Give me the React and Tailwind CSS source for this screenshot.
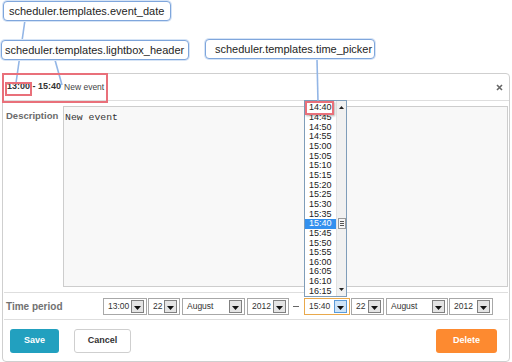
import React from "react";

const times = [
   "14:40", "14:45", "14:50", "14:55", "15:00", "15:05", "15:10", "15:15", "15:20", "15:25",
   "15:30", "15:35", "15:40", "15:45", "15:50", "15:55", "16:00", "16:05", "16:10", "16:15",
];

function Arrow({ focus }) {
   return (
      <div
         className={
            "ml-auto mr-[2px] w-[13px] h-[13px] border flex items-center justify-center " +
            (focus ? "border-[#5b9bd8] bg-[#cfe5f8]" : "border-[#808080] bg-[#e4e4e4]")
         }
      >
         <svg width="7" height="4" viewBox="0 0 7 4" className="mt-[3px]">
            <path d="M0 0 L7 0 L3.5 4 Z" fill="#111" />
         </svg>
      </div>
   );
}

function Select({ value, width, focus }) {
   return (
      <div
         className={
            "flex items-center h-[17px] bg-white border text-[8.5px] text-[#333] " +
            width +
            (focus ? " border-[#e9a94c]" : " border-[#a8a8a8]")
         }
      >
         <span className="pl-[4px]">{value}</span>
         <Arrow focus={focus} />
      </div>
   );
}

function Callout({ text, className }) {
   return (
      <div
         className={
            "absolute h-[20px] flex items-center bg-white border border-[#7fa6dc] rounded-[4px] shadow-[0_0_0_1px_#d6e4f6] text-[11px] text-[#1e1e1e] " +
            className
         }
      >
         {text}
      </div>
   );
}

export default function App() {
   return (
      <div className="relative w-[512px] h-[362px] bg-white overflow-hidden font-['Liberation_Sans',Arial,sans-serif]">
         {/* lightbox */}
         <div className="mt-[73px] ml-[2px] w-[508px] h-[289px] border border-[#cfcfcf] rounded-[4px] flex flex-col">
            <div className="h-[27px] shrink-0 border-b border-[#dedede] flex items-center pl-[4px] pr-[6px]">
               <span className="text-[9px] font-bold text-[#333]">13:00 - 15:40</span>
               <span className="ml-[3px] text-[8.5px] text-[#444]">New event</span>
               <svg width="7" height="7" viewBox="0 0 7 7" className="ml-auto">
                  <path d="M1 1 L6 6 M6 1 L1 6" stroke="#666" strokeWidth="1.6" />
               </svg>
            </div>

            <div className="flex pt-[5px]">
               <div className="w-[60px] shrink-0 pl-[3px] pt-[3px] text-[9.5px] font-bold text-[#6a6a6a]">
                  Description
               </div>
               <div className="w-[445px] h-[181px] bg-[#f8f8f8] border border-[#cdcdcd] pl-[1px] pt-[4px] font-['Liberation_Mono',monospace] text-[9.8px] text-[#333]">
                  New event
               </div>
            </div>

            <div className="mt-[5px] mx-[1px] border-t border-[#dedede]" />

            <div className="h-[26px] flex items-center">
               <div className="w-[100px] shrink-0 pl-[3px] text-[10px] font-bold text-[#717171]">
                  Time period
               </div>
               <Select value="13:00" width="w-[44px]" />
               <div className="ml-[1px]">
                  <Select value="22" width="w-[32px]" />
               </div>
               <div className="ml-[2px]">
                  <Select value="August" width="w-[63px]" />
               </div>
               <div className="ml-[2px]">
                  <Select value="2012" width="w-[42px]" />
               </div>
               <div className="ml-[4px] mr-[5px] w-[6px] h-[1px] bg-[#666]" />
               <Select value="15:40" width="w-[46px]" focus />
               <div className="ml-[1px]">
                  <Select value="22" width="w-[33px]" />
               </div>
               <div className="ml-[2px]">
                  <Select value="August" width="w-[62px]" />
               </div>
               <div className="ml-[1px]">
                  <Select value="2012" width="w-[44px]" />
               </div>
            </div>

            <div className="mx-[1px] border-t border-[#dedede]" />

            <div className="flex pt-[9px] pl-[7px] pr-[12px]">
               <div className="w-[49px] h-[24px] rounded-[3px] bg-[#22a0bf] flex items-center justify-center text-[9px] font-bold text-white">
                  Save
               </div>
               <div className="ml-[15px] w-[57px] h-[24px] rounded-[3px] bg-white border border-[#cfcfcf] flex items-center justify-center text-[9px] font-bold text-[#333]">
                  Cancel
               </div>
               <div className="ml-auto w-[61px] h-[24px] rounded-[3px] bg-[#fd8a30] flex items-center justify-center text-[9px] font-bold text-white">
                  Delete
               </div>
            </div>
         </div>

         {/* time picker dropdown */}
         <div className="absolute left-[304px] top-[100px] w-[43px] h-[197px] border border-[#7f9db9] bg-white flex">
            <div className="w-[31px] flex flex-col pt-[2px]">
               {times.map((t) => (
                  <div
                     key={t}
                     className={
                        "flex-1 flex items-center pl-[4px] text-[9px] leading-none " +
                        (t === "15:40" ? "bg-[#3390ee] text-white" : "text-[#222]")
                     }
                  >
                     {t}
                  </div>
               ))}
            </div>
            <div className="relative w-[10px] bg-[#f1f1f1] border-l border-[#e2e2e2]">
               <svg width="5" height="3" viewBox="0 0 5 3" className="absolute left-[2px] top-[5px]">
                  <path d="M0 3 L5 3 L2.5 0 Z" fill="#222" />
               </svg>
               <div className="absolute left-[1px] top-[117px] w-[8px] h-[11px] bg-[#f6f6f6] border border-[#999] flex flex-col items-center justify-center gap-[1px]">
                  <div className="w-[4px] h-[1px] bg-[#555]" />
                  <div className="w-[4px] h-[1px] bg-[#555]" />
                  <div className="w-[4px] h-[1px] bg-[#555]" />
               </div>
               <svg width="5" height="3" viewBox="0 0 5 3" className="absolute left-[2px] bottom-[5px]">
                  <path d="M0 0 L5 0 L2.5 3 Z" fill="#222" />
               </svg>
            </div>
         </div>

         {/* pointer lines */}
         <svg className="absolute left-0 top-0 pointer-events-none" width="512" height="362">
            <g stroke="#93b6e6" strokeWidth="1.6" fill="none">
               <line x1="25" y1="20" x2="16" y2="83" />
               <line x1="55" y1="60" x2="62" y2="85" />
               <line x1="317" y1="59" x2="318" y2="102" />
            </g>
         </svg>

         <Callout text="scheduler.templates.event_date" className="left-[3px] top-[1px] w-[168px] pl-[5px]" />
         <Callout text="scheduler.templates.lightbox_header" className="left-[1px] top-[40px] w-[188px] pl-[3px]" />
         <Callout text="scheduler.templates.time_picker" className="left-[205px] top-[39px] w-[170px] pl-[9px]" />

         {/* highlights */}
         <div className="absolute left-[2px] top-[73px] w-[106px] h-[30px] border-2 border-[#e9707a]" />
         <div className="absolute left-[5px] top-[82px] w-[27px] h-[14px] border-2 border-[#e9707a]" />
         <div className="absolute left-[305px] top-[101px] w-[29px] h-[14px] border-2 border-[#e9707a] shadow-[1px_1px_2px_rgba(0,0,0,0.3)]" />
      </div>
   );
}
